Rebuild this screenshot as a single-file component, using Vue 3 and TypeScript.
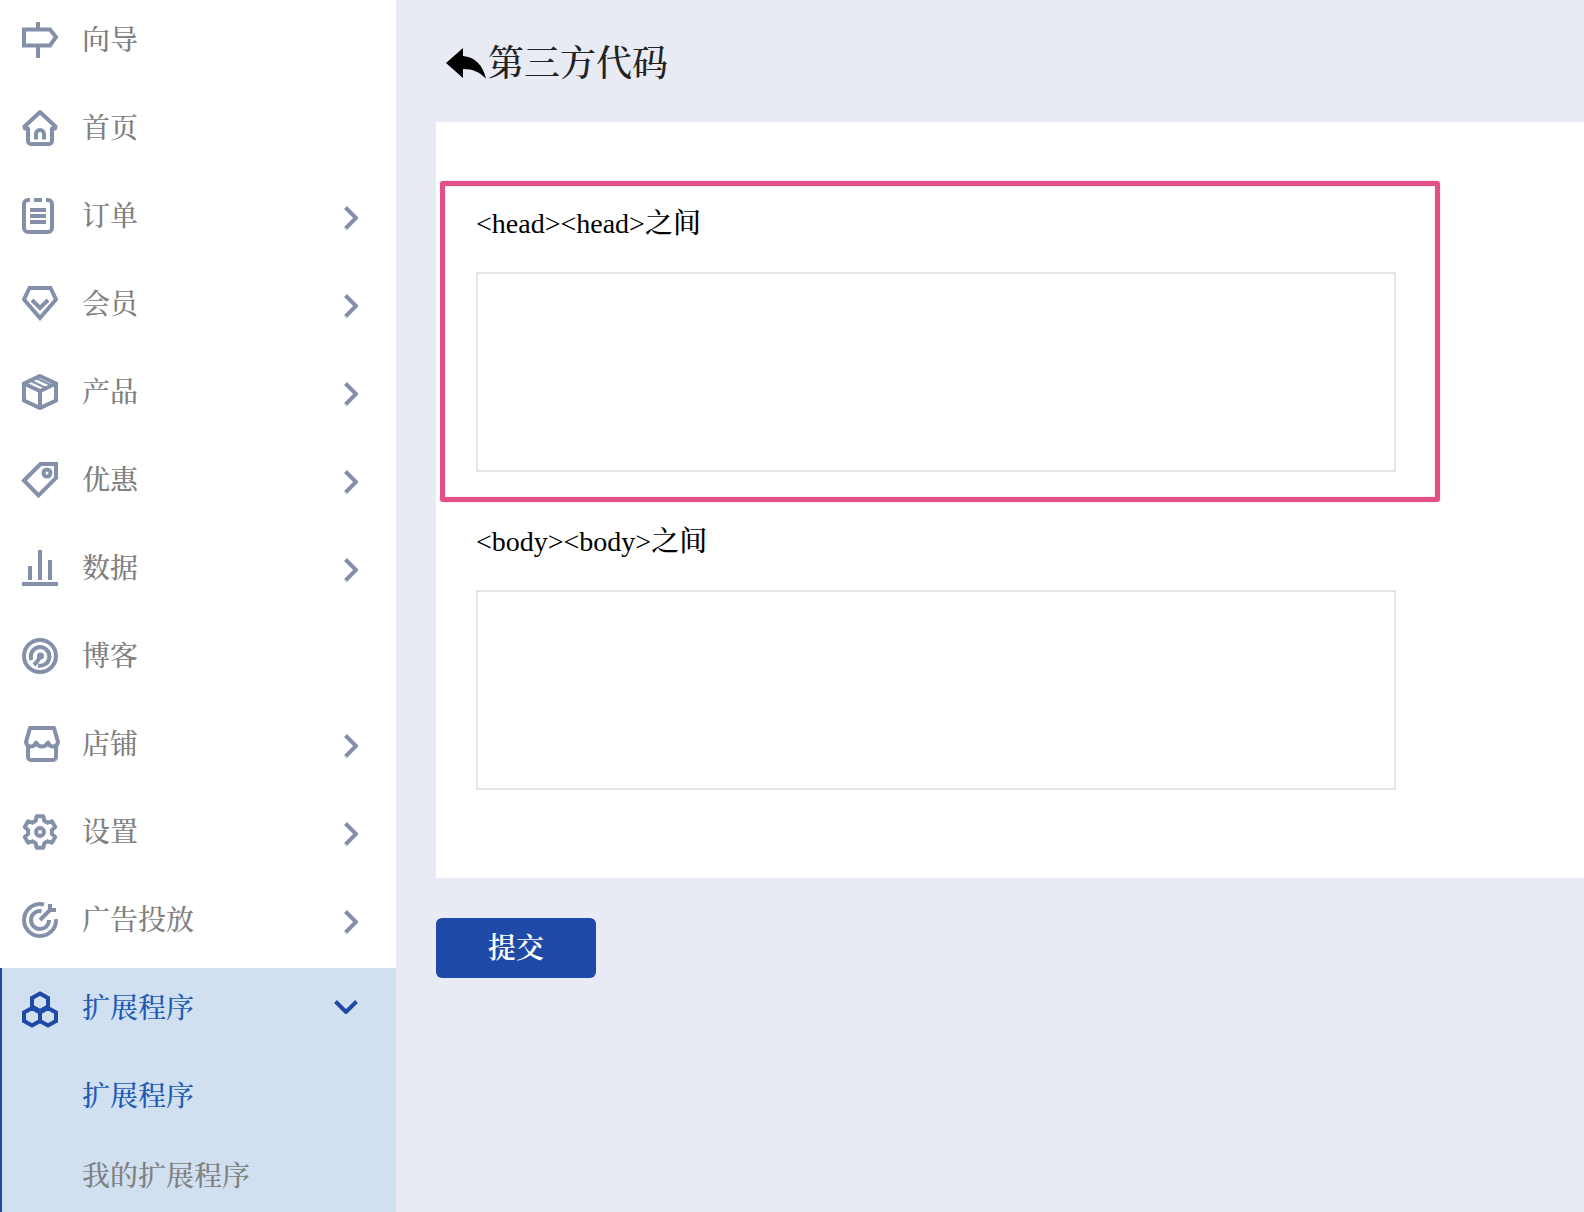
<script setup lang="ts">
interface MenuItem {
  name: string
  icon: string
  expandable: boolean
}

// Corner points of a six-toothed gear, as an SVG points list.
function gearPoints(): string {
  const points: string[] = []
  for (let tooth = 0; tooth < 6; tooth++) {
    const steps: [number, number][] = [[-21, 12], [-12, 16], [12, 16], [21, 12]]
    for (const [offset, radius] of steps) {
      const angle = ((tooth * 60 + offset - 90) * Math.PI) / 180
      points.push(`${(18 + radius * Math.cos(angle)).toFixed(2)},${(18 + radius * Math.sin(angle)).toFixed(2)}`)
    }
  }
  return points.join(' ')
}

const gear = gearPoints()

const items: MenuItem[] = [
  { name: '向导', icon: 'guide', expandable: false },
  { name: '首页', icon: 'home', expandable: false },
  { name: '订单', icon: 'order', expandable: true },
  { name: '会员', icon: 'member', expandable: true },
  { name: '产品', icon: 'product', expandable: true },
  { name: '优惠', icon: 'coupon', expandable: true },
  { name: '数据', icon: 'data', expandable: true },
  { name: '博客', icon: 'blog', expandable: false },
  { name: '店铺', icon: 'shop', expandable: true },
  { name: '设置', icon: 'settings', expandable: true },
  { name: '广告投放', icon: 'ads', expandable: true },
]
</script>

<template>
  <div class="layout">
    <nav class="sidebar">
      <a v-for="item in items" :key="item.icon" href="#" class="row">
        <svg class="icon" viewBox="0 0 36 36" aria-hidden="true">
          <template v-if="item.icon === 'guide'">
            <path d="M2 7.500H28L34 15L28 23.500H2Z" />
            <path d="M16 0V7M16 24V36" />
          </template>
          <template v-else-if="item.icon === 'home'">
            <path d="M6 18.500H3L2.500 16.500L18 2L33.500 16.500L33 18.500H30V31a3 3 0 0 1-3 3H9a3 3 0 0 1-3-3Z" stroke-linejoin="round" />
            <path d="M14 29.500V24a4 4 0 0 1 8 0V29.500" />
          </template>
          <template v-else-if="item.icon === 'order'">
            <path d="M8 2H6a4 4 0 0 0-4 4V30a4 4 0 0 0 4 4H26a4 4 0 0 0 4-4V6a4 4 0 0 0-4-4H24M12 2H20" />
            <path d="M8 12H24M8 18H24M8 24H24" />
          </template>
          <template v-else-if="item.icon === 'member'">
            <path d="M7.500 2H28.500L34 13.500L18 32L2 13.500Z" />
            <path d="M10 14L18 22L26 14" />
          </template>
          <template v-else-if="item.icon === 'product'">
            <path d="M18 2L34 9.500V26.500L18 34L2 26.500V9.500Z" />
            <path d="M2 9.500L18 17L34 9.500M18 17V34" />
            <path d="M8 6.500L24 14M14 4L30 11.500" stroke-width="2" />
          </template>
          <template v-else-if="item.icon === 'coupon'">
            <path d="M18.500 2H34V16L16.500 33.500L2 18.500Z" />
            <circle cx="25" cy="11" r="3.500" />
          </template>
          <template v-else-if="item.icon === 'data'">
            <path d="M0 34H36M8 16V30M18 0V30M28 10V30" />
          </template>
          <template v-else-if="item.icon === 'blog'">
            <circle cx="18" cy="18" r="16" />
            <path d="M9.500 22A9.300 9.300 0 1 1 16 27.500" />
            <path d="M18 18Q17 22 12 27" />
            <circle class="solid" cx="18.500" cy="18" r="3.500" />
          </template>
          <template v-else-if="item.icon === 'shop'">
            <path d="M8 2H32L36 16q-1 5-5 4.500q-3.500 0-5-4q-2 4-6 4t-6-4q-1.500 4-5 4q-4 .5-5-4.500Z" stroke-linejoin="round" />
            <path d="M6 21V31a3 3 0 0 0 3 3H31a3 3 0 0 0 3-3V21" />
          </template>
          <template v-else-if="item.icon === 'settings'">
            <polygon :points="gear" stroke-linejoin="round" />
            <circle cx="18" cy="18" r="4" />
          </template>
          <template v-else>
            <path d="M22 2.500A16 16 0 1 0 34 17" />
            <path d="M19.500 9.200A9 9 0 1 0 27 18" />
            <path d="M18 18L28 8M28 2V8H34" />
          </template>
        </svg>
        <span class="name">{{ item.name }}</span>
        <svg v-if="item.expandable" class="chevron" viewBox="0 0 14 24" aria-hidden="true">
          <path d="M1.500 1.500L12 12L1.500 22.500" />
        </svg>
      </a>

      <div class="group">
        <button type="button" class="row current" aria-expanded="true">
          <svg class="icon" viewBox="0 0 36 36" aria-hidden="true">
            <path d="M18 3.500L26 8V16.500L18 21L10 16.500V8Z" />
            <path d="M10 18L18 22.500V31L10 35.500L2 31V22.500ZM26 18L34 22.500V31L26 35.500L18 31V22.500Z" />
          </svg>
          <span class="name">扩展程序</span>
          <svg class="chevron open" viewBox="0 0 24 14" aria-hidden="true">
            <path d="M1.500 1.500L12 12L22.500 1.500" />
          </svg>
        </button>
        <a href="#" class="sub current">扩展程序</a>
        <a href="#" class="sub">我的扩展程序</a>
      </div>
    </nav>

    <main class="content">
      <header class="heading">
        <a href="#" class="back" aria-label="返回">
          <svg viewBox="0 0 40 32" aria-hidden="true">
            <path d="M0 15L17 0V8C29 9 37 17 40 31C34 24 27 21 17 21V30Z" />
          </svg>
        </a>
        <h1>第三方代码</h1>
      </header>

      <form class="form" @submit.prevent>
        <div class="panel">
          <div class="field marked">
            <label for="head-code">&lt;head&gt;&lt;head&gt;之间</label>
            <textarea id="head-code"></textarea>
          </div>
          <div class="field">
            <label for="body-code">&lt;body&gt;&lt;body&gt;之间</label>
            <textarea id="body-code"></textarea>
          </div>
        </div>
        <button type="submit" class="submit">提交</button>
      </form>
    </main>
  </div>
</template>

<style>
body {
  margin: 0;
  background: #e8ebf3;
}
</style>

<style scoped>
.layout {
  display: flex;
  min-height: 100vh;
  font-family: "Liberation Serif", "Noto Serif CJK SC", "Noto Sans CJK SC", serif;
  font-size: 28px;
  font-weight: 500;
  line-height: 38px;
  color: #000;
}

.sidebar {
  display: flex;
  flex-direction: column;
  flex: 0 0 396px;
  background: #fff;
}

.row {
  display: flex;
  align-items: flex-start;
  box-sizing: border-box;
  width: 100%;
  height: 88px;
  padding: 22px 38px 0 22px;
  color: #808080;
  text-decoration: none;
}

.icon,
.chevron {
  flex: none;
  fill: none;
  stroke: #8490aa;
  stroke-width: 4;
}

.icon {
  width: 36px;
  height: 36px;
  overflow: visible;
}

.icon .solid {
  fill: #8490aa;
  stroke: none;
}

.name {
  flex: 1;
  margin-left: 24px;
  text-align: left;
}

.chevron {
  width: 14px;
  height: 24px;
  margin-top: 8px;
}

.chevron.open {
  width: 24px;
  height: 14px;
  margin-top: 10px;
}

.group {
  display: flex;
  flex-direction: column;
  flex: 1;
  box-sizing: border-box;
  border-left: 2px solid #1f49a6;
  background: #d1e0f0;
}

.group .row {
  padding-left: 20px;
  border: 0;
  background: none;
  font: inherit;
}

.group .icon,
.group .chevron {
  stroke: #1f49a6;
}

.sub {
  height: 58px;
  padding: 22px 20px 0 80px;
  color: #808080;
  text-decoration: none;
}

.row.current,
.sub.current {
  color: #1d5bb5;
}

.content {
  flex: 1;
  min-width: 0;
  padding-left: 40px;
}

.heading {
  display: flex;
  align-items: center;
  gap: 2px;
  box-sizing: border-box;
  height: 122px;
  padding: 6px 0 0 10px;
}

.back {
  display: block;
  width: 40px;
  height: 32px;
}

.back svg {
  display: block;
  width: 40px;
  height: 32px;
  fill: #000;
}

h1 {
  margin: 0;
  font-size: 36px;
  font-weight: 500;
  line-height: 48px;
  color: #222;
}

.panel {
  display: flex;
  flex-direction: column;
  gap: 48px;
  padding: 80px 40px 88px;
  background: #fff;
}

.field {
  position: relative;
  display: flex;
  flex-direction: column;
  gap: 26px;
  max-width: 920px;
}

.field label {
  line-height: 44px;
}

.marked::after {
  content: "";
  position: absolute;
  inset: -21px -44px -30px -36px;
  border: 5px solid #e54f87;
  border-radius: 3px;
  box-shadow: 0 0 1px #e54f87, inset 0 0 1px #e54f87;
  pointer-events: none;
}

textarea {
  display: block;
  box-sizing: border-box;
  width: 100%;
  height: 200px;
  padding: 12px;
  border: 2px solid #e5e5e5;
  background: #fff;
  font: inherit;
  resize: none;
  outline: none;
}

.submit {
  display: block;
  width: 160px;
  height: 60px;
  margin: 40px 0;
  padding: 2px 0 0;
  border: 0;
  border-radius: 6px;
  background: #1f49a6;
  color: #fff;
  font: inherit;
  font-weight: 600;
}
</style>
